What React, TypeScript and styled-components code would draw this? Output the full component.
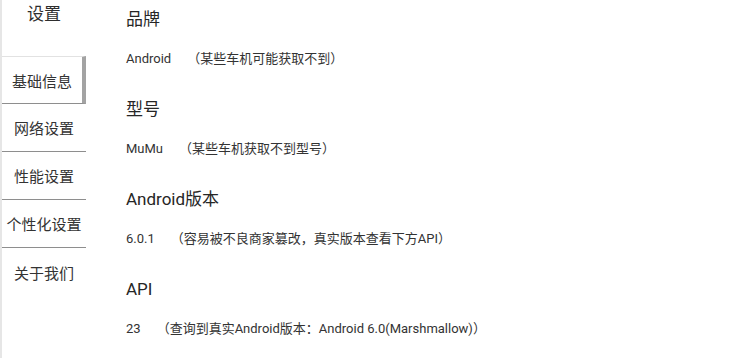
import React from "react";
import styled, { createGlobalStyle } from "styled-components";

const Global = createGlobalStyle`
  html, body {
    margin: 0;
    padding: 0;
    background: #ffffff;
  }
  body {
    font-family: Roboto, "Noto Sans CJK SC", "Noto Sans", sans-serif;
    color: #2b2b2b;
  }
`;

const Page = styled.div`
  display: flex;
  width: 730px;
  height: 358px;
  background: #ffffff;
  overflow: hidden;
`;

const Sidebar = styled.nav`
  display: flex;
  flex-direction: column;
  width: 84px;
  flex: none;
  border-left: 2px solid #e6e6e6;
`;

const SidebarTitle = styled.div`
  height: 56px;
  box-sizing: border-box;
  padding-top: 4px;
  font-size: 17px;
  line-height: 20px;
  text-align: center;
  color: #2e2e2e;
`;

const NavItem = styled.div<{ $active?: boolean; $last?: boolean }>`
  display: flex;
  align-items: center;
  justify-content: center;
  height: 48px;
  box-sizing: border-box;
  font-size: 15px;
  color: #333333;
  white-space: nowrap;
  border-bottom: ${(p) => (p.$last ? "none" : "1px solid #8e8e8e")};
  border-top: ${(p) => (p.$active ? "1px solid #e2e2e2" : "none")};
  border-right: ${(p) => (p.$active ? "4px solid #a3a3a3" : "none")};
`;

const Content = styled.main`
  display: flex;
  flex-direction: column;
  gap: 28px;
  padding: 7px 0 0 40px;
`;

const Section = styled.section`
  display: flex;
  flex-direction: column;
`;

const Heading = styled.div`
  font-size: 17px;
  line-height: 24px;
  color: #262626;
`;

const ValueRow = styled.div`
  display: flex;
  align-items: center;
  margin-top: 18px;
  font-size: 13px;
  line-height: 20px;
  color: #333333;
  white-space: nowrap;
`;

const Note = styled.span`
  margin-left: 16px;
`;

const navItems = ["基础信息", "网络设置", "性能设置", "个性化设置", "关于我们"];

const sections = [
  { title: "品牌", value: "Android", note: "（某些车机可能获取不到）" },
  { title: "型号", value: "MuMu", note: "（某些车机获取不到型号）" },
  {
    title: "Android版本",
    value: "6.0.1",
    note: "（容易被不良商家篡改，真实版本查看下方API）",
  },
  {
    title: "API",
    value: "23",
    note: "（查询到真实Android版本：Android 6.0(Marshmallow)）",
  },
];

export default function App() {
  return (
    <>
      <Global />
      <Page>
        <Sidebar>
          <SidebarTitle>设置</SidebarTitle>
          {navItems.map((label, i) => (
            <NavItem
              key={label}
              $active={i === 0}
              $last={i === navItems.length - 1}
            >
              {label}
            </NavItem>
          ))}
        </Sidebar>
        <Content>
          {sections.map((s) => (
            <Section key={s.title}>
              <Heading>{s.title}</Heading>
              <ValueRow>
                <span>{s.value}</span>
                <Note>{s.note}</Note>
              </ValueRow>
            </Section>
          ))}
        </Content>
      </Page>
    </>
  );
}
